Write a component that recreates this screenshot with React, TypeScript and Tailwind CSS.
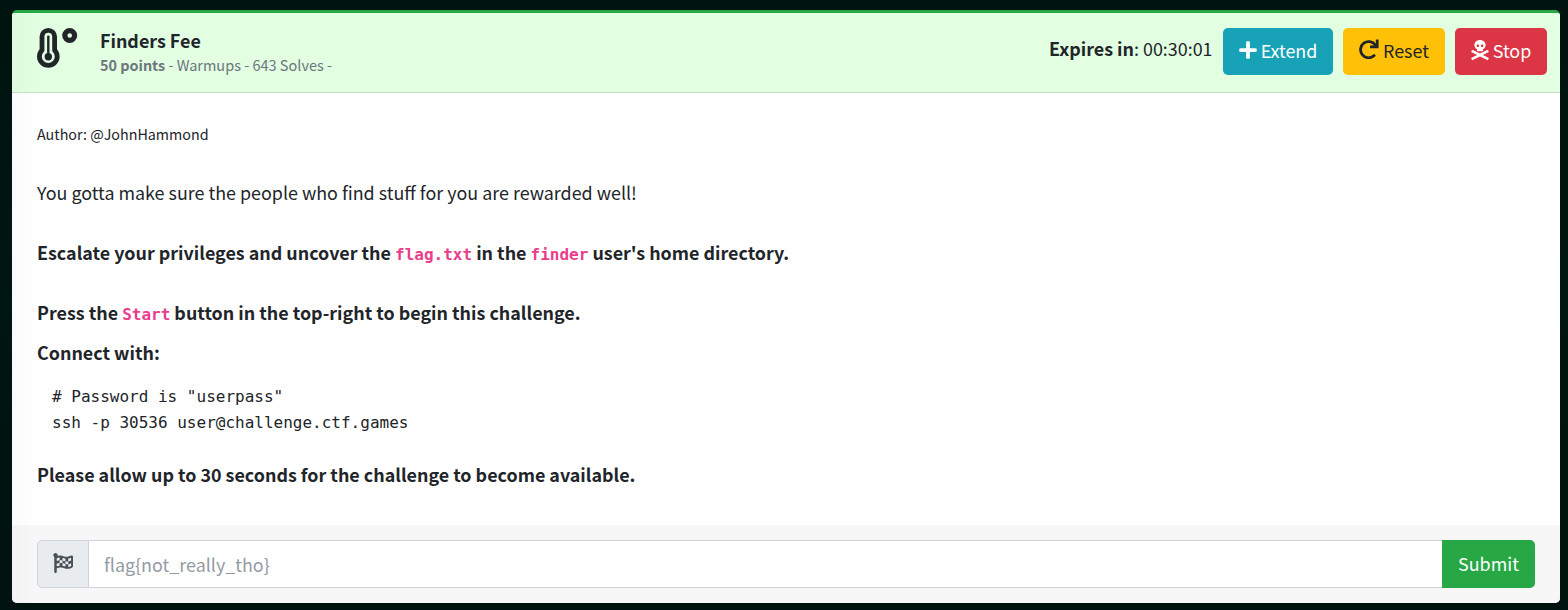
import React from "react";
import { FaPlus, FaSkullCrossbones, FaFlagCheckered } from "react-icons/fa";

function Thermometer() {
  return (
    <svg width="42" height="42" viewBox="0 0 42 42" fill="none" stroke="#212529">
      <path d="M5 23.2V9.6a6.3 6.3 0 0 1 12.6 0v13.6a8.9 8.9 0 1 1-12.6 0z" strokeWidth="4.8" strokeLinejoin="round" />
      <path d="M11.3 9.6v18" strokeWidth="2.4" strokeLinecap="round" />
      <circle cx="11.3" cy="29.7" r="3.7" fill="#212529" stroke="none" />
      <circle cx="32.7" cy="8.5" r="4.9" strokeWidth="5.2" />
    </svg>
  );
}

function Redo() {
  return (
    <svg className="-mt-[3px]" width="20" height="20" viewBox="0 0 20 20" fill="none" stroke="#212529" strokeWidth="2.8">
      <path d="M16.4 6.2A8.1 8.1 0 1 0 15.2 16.6" strokeLinecap="round" />
      <path d="M18.2 0.6v7.2H11" />
      <path d="M18.6 2.8v5h-5z" fill="#212529" stroke="none" />
    </svg>
  );
}

function Code({ children }: { children: React.ReactNode }) {
  return <code className="font-['DejaVu_Sans_Mono',monospace] text-[16px] font-bold text-[#e83e8c]">{children}</code>;
}

export default function App() {
  return (
    <div className="h-[610px] w-[1568px] bg-linear-to-b from-[#00140f] via-[#001610] to-[#00120e] pt-[10px] pl-[12px] font-['Noto_Sans_CJK_JP',sans-serif] text-[17.9px] text-[#212529]">
      <div className="relative flex h-[593px] w-[1548px] flex-col overflow-hidden rounded-[5px] border-t-[3px] border-[#28a745] bg-white">
        <header className="flex h-[80px] shrink-0 border-b border-[#c6dfc8] bg-[#e2ffe2] pr-[13px] pl-[25px]">
          <div className="mt-[14px] w-[63px]"><Thermometer /></div>
          <div className="pt-[13px]">
            <h1 className="h-[28px] text-[17.9px] leading-[28px] font-bold">Finders Fee</h1>
            <p className="h-[22px] text-[14.5px] leading-[22px] text-[#6c757d]"><b className="text-[14.4px]">50 points</b> - Warmups - 643 Solves -</p>
          </div>
          <div className="ml-auto flex items-start pt-[15px]">
            <div className="mr-[10.5px] leading-[41px]"><b>Expires in</b>: 00:30:01</div>
            <button className="mr-[10px] flex h-[47px] w-[110px] items-center justify-center gap-[2px] rounded-[5px] bg-[#17a2b8] pb-[2px] text-white"><FaPlus className="-mt-[1px] mr-[1px] -ml-[1px]" size={20} /><span>Extend</span></button>
            <button className="mr-[10px] flex h-[47px] w-[102px] items-center justify-center gap-[4px] rounded-[5px] bg-[#ffc107] pb-[2px]"><Redo /><span>Reset</span></button>
            <button className="flex h-[47px] w-[92px] items-center justify-center gap-[2px] rounded-[5px] bg-[#dc3545] pb-[2px] text-white"><FaSkullCrossbones className="-mt-[2px] mr-[1px] -ml-[1px]" size={20} /><span>Stop</span></button>
          </div>
        </header>
        <main className="flex h-[432px] shrink-0 flex-col pt-[26px] pl-[25px] leading-[30px]">
          <p className="text-[14.3px]">Author: @JohnHammond</p>
          <p className="mt-[28px]">You gotta make sure the people who find stuff for you are rewarded well!</p>
          <p className="mt-[30px] h-[30px] font-bold">Escalate your privileges and uncover the <Code>flag.txt</Code> in the <Code>finder</Code> user&apos;s home directory.</p>
          <p className="mt-[30px] h-[30px] font-bold">Press the <Code>Start</Code> button in the top-right to begin this challenge.</p>
          <p className="mt-[10px] font-bold">Connect with:</p>
          <pre className="mt-[17px] pl-[15px] font-['DejaVu_Sans_Mono',monospace] text-[16px] leading-[26px] text-[#212529]">{'# Password is "userpass"\nssh -p 30536 user@challenge.ctf.games'}</pre>
          <p className="mt-[23px] font-bold">Please allow up to 30 seconds for the challenge to become available.</p>
        </main>
        <footer className="flex h-[78px] shrink-0 bg-[#f7f7f7] px-[25px] pt-[15px]">
          <div className="flex h-[48px] w-[52px] items-center justify-center rounded-l-[5px] border border-[#ced4da] bg-[#e9ecef] pb-[2px] text-[#495057]"><FaFlagCheckered size={20} /></div>
          <div className="h-[48px] flex-1 border-y border-[#ced4da] bg-white pl-[15px] leading-[47px] text-[#939ba2]">flag&#123;not_really_tho&#125;</div>
          <button className="h-[48px] w-[93px] rounded-r-[5px] bg-[#28a745] pb-[2px] text-white">Submit</button>
        </footer>
        <div className="pointer-events-none absolute inset-y-0 left-0 w-[25px] bg-linear-to-r from-black/[0.02] to-transparent" />
      </div>
    </div>
  );
}
